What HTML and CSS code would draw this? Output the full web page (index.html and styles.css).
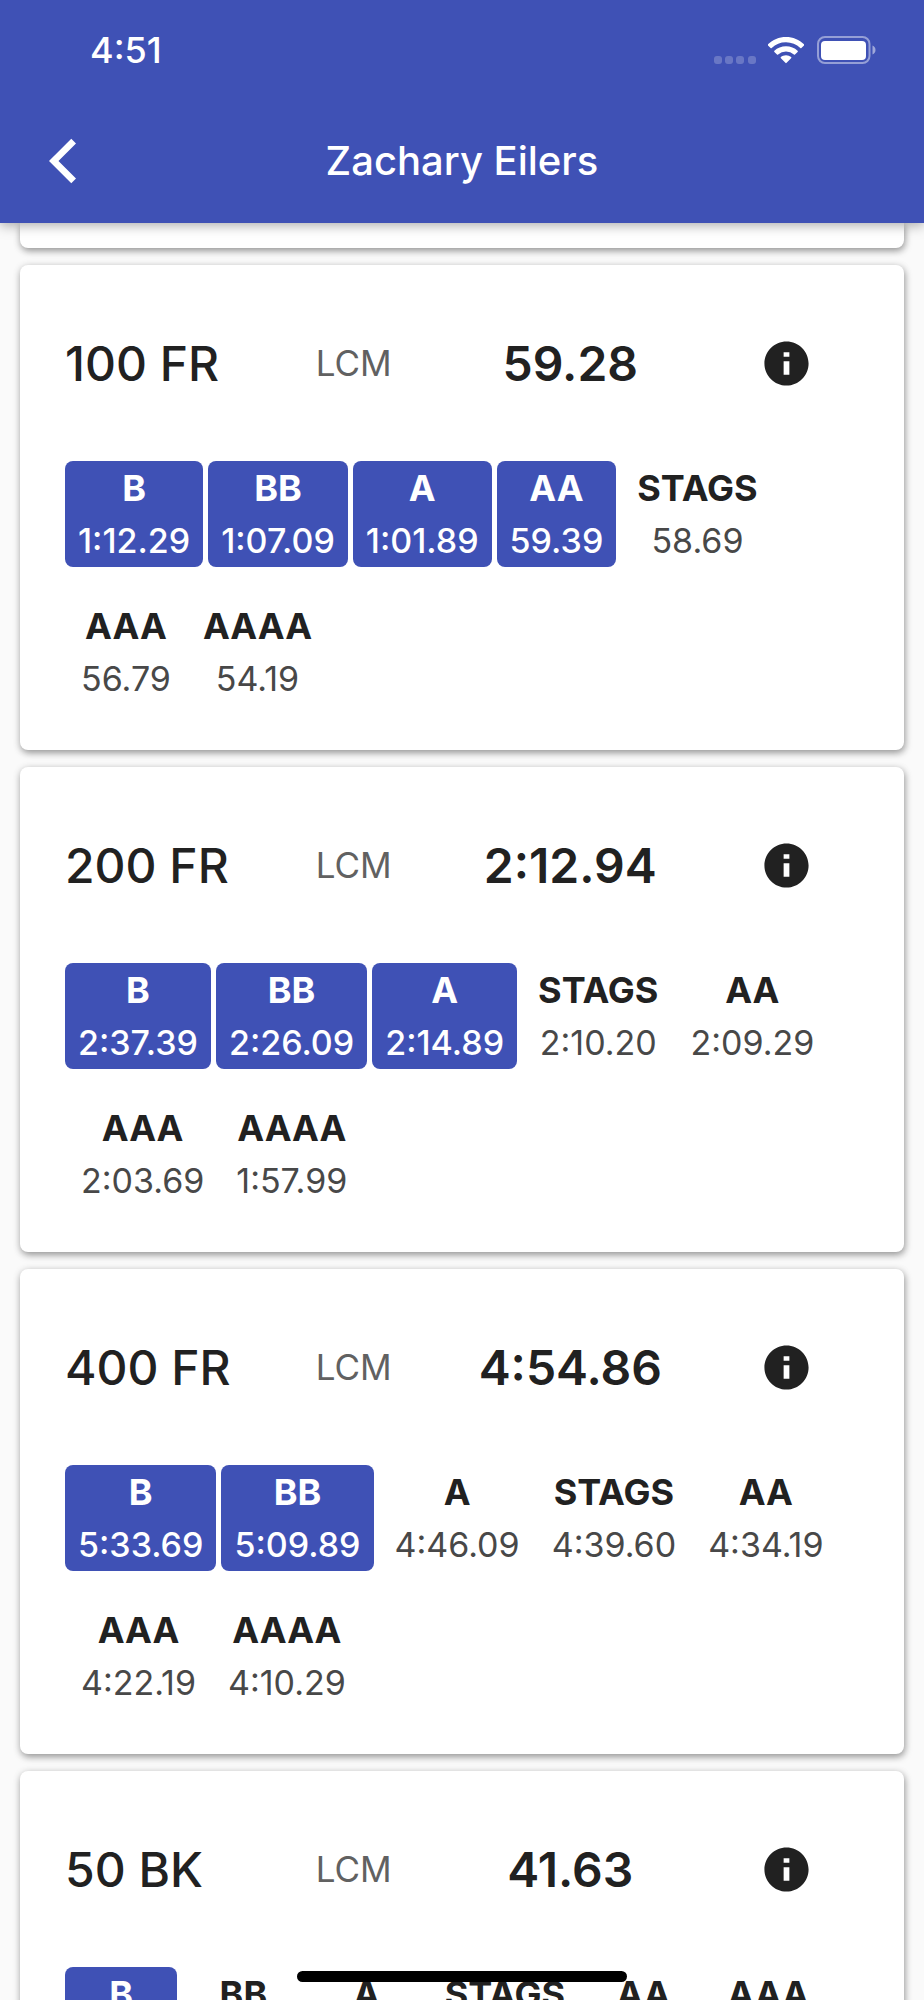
FILE: index.html
```html
<!DOCTYPE html>
<html lang="en">

<head>
    <meta charset="UTF-8">
    <meta name="viewport" content="width=device-width, initial-scale=1.0">
    <title>Zachary Eilers</title>
    <link rel="stylesheet" href="styles.css">
</head>

<body>
    <svg class="sprite" aria-hidden="true">
        <symbol id="info" viewBox="0 0 24 24">
            <path d="M12 2C6.48 2 2 6.48 2 12s4.48 10 10 10 10-4.48 10-10S17.52 2 12 2zm1.300 15.100h-2.600V11h2.600v6.100zm0-8.200h-2.600V6.900h2.600v2z"/>
        </symbol>
    </svg>

    <div class="app">
        <header class="topbar">
            <div class="status">
                <span class="clock">4:51</span>
                <div class="status-icons">
                    <svg class="signal" viewBox="0 0 42 28" width="42" height="28">
                        <rect x="0" y="20" width="8" height="8" rx="3"/>
                        <rect x="11" y="20" width="8" height="8" rx="3"/>
                        <rect x="22" y="20" width="8" height="8" rx="3"/>
                        <rect x="34" y="20" width="8" height="8" rx="3"/>
                    </svg>
                    <svg class="wifi" viewBox="0 0 36 28" width="36" height="28">
                        <path d="M18 1C11 1 4.700 3.700 0 8.300a.8.8 0 0 0 0 1.100l2.600 2.500a.8.8 0 0 0 1.100 0A20.500 20.500 0 0 1 18 6.200c5.500 0 10.500 2.200 14.300 5.700a.8.8 0 0 0 1.100 0L36 9.400a.8.8 0 0 0 0-1.100C31.300 3.700 25 1 18 1z"/>
                        <path d="M18 10.200c-4.500 0-8.600 1.700-11.600 4.500a.8.8 0 0 0 0 1.200l2.600 2.600a.8.8 0 0 0 1.100 0 11.800 11.800 0 0 1 15.800 0 .8.8 0 0 0 1.100 0l2.600-2.600a.8.8 0 0 0 0-1.200c-3-2.800-7.100-4.500-11.600-4.500z"/>
                        <path d="M18 19.200c-2 0-3.800.7-5.100 1.900a.8.8 0 0 0 0 1.200l4.500 4.500a.8.8 0 0 0 1.200 0l4.500-4.500a.8.8 0 0 0 0-1.200 7.500 7.500 0 0 0-5.100-1.900z"/>
                    </svg>
                    <svg class="battery" viewBox="-1 0 60 28" width="60" height="28">
                        <rect class="shell" x="1" y="1" width="51.500" height="26" rx="7"/>
                        <rect x="4" y="5" width="45" height="19" rx="4"/>
                        <path class="nub" d="M55.500 9.500v9c1.800-.8 3-2.500 3-4.500s-1.200-3.700-3-4.500z"/>
                    </svg>
                </div>
            </div>
            <div class="nav">
                <button class="back" type="button" aria-label="Back">
                    <svg viewBox="0 0 24 24" width="54" height="54">
                        <path d="M12 4.200L9.900 2.100 0 12l9.900 9.900 2.100-2.100L4.200 12z"/>
                    </svg>
                </button>
                <h1 class="title">Zachary Eilers</h1>
            </div>
        </header>

        <main class="list">
            <div class="card-end"></div>

            <section class="card">
                <div class="event">
                    <h2 class="name">100 FR</h2>
                    <span class="course">LCM</span>
                    <span class="best">59.28</span>
                    <button class="info" type="button" aria-label="Info"><svg><use href="#info"/></svg></button>
                </div>
                <div class="cuts">
                    <div class="cut made"><b>B</b><span>1:12.29</span></div>
                    <div class="cut made"><b>BB</b><span>1:07.09</span></div>
                    <div class="cut made"><b>A</b><span>1:01.89</span></div>
                    <div class="cut made"><b>AA</b><span>59.39</span></div>
                    <div class="cut"><b>STAGS</b><span>58.69</span></div>
                    <div class="cut"><b>AAA</b><span>56.79</span></div>
                    <div class="cut"><b>AAAA</b><span>54.19</span></div>
                </div>
            </section>

            <section class="card">
                <div class="event">
                    <h2 class="name">200 FR</h2>
                    <span class="course">LCM</span>
                    <span class="best">2:12.94</span>
                    <button class="info" type="button" aria-label="Info"><svg><use href="#info"/></svg></button>
                </div>
                <div class="cuts">
                    <div class="cut made"><b>B</b><span>2:37.39</span></div>
                    <div class="cut made"><b>BB</b><span>2:26.09</span></div>
                    <div class="cut made"><b>A</b><span>2:14.89</span></div>
                    <div class="cut"><b>STAGS</b><span>2:10.20</span></div>
                    <div class="cut"><b>AA</b><span>2:09.29</span></div>
                    <div class="cut"><b>AAA</b><span>2:03.69</span></div>
                    <div class="cut"><b>AAAA</b><span>1:57.99</span></div>
                </div>
            </section>

            <section class="card">
                <div class="event">
                    <h2 class="name">400 FR</h2>
                    <span class="course">LCM</span>
                    <span class="best">4:54.86</span>
                    <button class="info" type="button" aria-label="Info"><svg><use href="#info"/></svg></button>
                </div>
                <div class="cuts">
                    <div class="cut made"><b>B</b><span>5:33.69</span></div>
                    <div class="cut made"><b>BB</b><span>5:09.89</span></div>
                    <div class="cut"><b>A</b><span>4:46.09</span></div>
                    <div class="cut"><b>STAGS</b><span>4:39.60</span></div>
                    <div class="cut"><b>AA</b><span>4:34.19</span></div>
                    <div class="cut"><b>AAA</b><span>4:22.19</span></div>
                    <div class="cut"><b>AAAA</b><span>4:10.29</span></div>
                </div>
            </section>

            <section class="card">
                <div class="event">
                    <h2 class="name">50 BK</h2>
                    <span class="course">LCM</span>
                    <span class="best">41.63</span>
                    <button class="info" type="button" aria-label="Info"><svg><use href="#info"/></svg></button>
                </div>
                <div class="cuts">
                    <div class="cut made"><b>B</b><span>42.19</span></div>
                    <div class="cut"><b>BB</b><span>39.79</span></div>
                    <div class="cut"><b>A</b><span>36.69</span></div>
                    <div class="cut"><b>STAGS</b><span>35.89</span></div>
                    <div class="cut"><b>AA</b><span>34.69</span></div>
                    <div class="cut"><b>AAA</b><span>33.29</span></div>
                    <div class="cut"><b>AAAA</b><span>31.89</span></div>
                </div>
            </section>
        </main>

        <div class="home-bar"></div>
    </div>
</body>

</html>
```

FILE: styles.css
```css
* {
    box-sizing: border-box;
}

body {
    margin: 0;
    background-color: #fafafa;
    font-family: Inter, "Liberation Sans", sans-serif;
    color: #212121;
}

button {
    padding: 0;
    border: none;
    background: none;
    color: inherit;
    cursor: pointer;
}

svg {
    display: block;
    fill: currentColor;
}

.sprite {
    display: none;
}

.app {
    display: flex;
    flex-direction: column;
    height: 100vh;
    overflow: hidden;
}

/* top bar */
.topbar {
    position: relative;
    z-index: 1;
    flex: none;
    background-color: #3f51b5;
    color: white;
    box-shadow: 0 2px 12px rgba(0, 0, 0, 0.35);
}

.status {
    display: flex;
    justify-content: space-between;
    align-items: center;
    height: 98px;
    padding: 2px 48px 0 90px;
}

.clock {
    font-size: 36px;
    font-weight: 500;
}

.status-icons {
    display: flex;
    align-items: center;
    gap: 12px;
}

.signal {
    opacity: 0.22;
}

.shell {
    fill: none;
    stroke: currentColor;
    stroke-width: 2;
    opacity: 0.45;
}

.nub {
    opacity: 0.5;
}

.nav {
    display: grid;
    grid-template-columns: 54px 1fr 54px;
    align-items: center;
    height: 125px;
    padding: 0 49px;
}

.title {
    margin: 0;
    font-size: 40px;
    font-weight: 500;
    text-align: center;
}

/* event cards */
.list {
    display: flex;
    flex-direction: column;
    flex: 1;
    gap: 17px;
    min-height: 0;
    padding: 0 20px 60px;
    overflow-y: auto;
    scrollbar-width: none;
}

.card,
.card-end {
    flex: none;
    background-color: white;
    border-radius: 8px;
    box-shadow: 1px 3px 7px rgba(0, 0, 0, 0.35), 0 1px 8px rgba(0, 0, 0, 0.1);
}

.card-end {
    height: 25px;
    border-radius: 0 0 8px 8px;
}

.card {
    display: flex;
    flex-direction: column;
    gap: 45px;
    padding: 45px;
}

.event {
    display: grid;
    grid-template-columns: 3fr 2fr 4fr 2fr;
    align-items: center;
    justify-items: center;
    height: 106px;
}

.name {
    justify-self: start;
    margin: 0;
    font-size: 48px;
    font-weight: 500;
}

.course {
    font-size: 35px;
    color: #616161;
}

.best {
    font-size: 48px;
    font-weight: 600;
}

.info svg {
    width: 53px;
    height: 53px;
}

.cuts {
    display: flex;
    flex-wrap: wrap;
    row-gap: 32px;
}

.cut {
    padding: 0 16px;
    text-align: center;
    color: #484848;
}

.cut b {
    display: block;
    font-size: 36px;
    font-weight: 700;
    line-height: 54px;
    color: #212121;
}

.cut span {
    display: block;
    font-size: 34px;
    line-height: 52px;
}

.made {
    margin-right: 5px;
    padding: 0 13px;
    border-radius: 8px;
    background-color: #3f51b5;
    color: white;
}

.made b {
    color: white;
}

.made span {
    font-weight: 500;
}

.home-bar {
    position: fixed;
    z-index: 2;
    bottom: 18px;
    left: 50%;
    width: 330px;
    height: 11px;
    border-radius: 6px;
    background-color: black;
    transform: translateX(-50%);
}
```
